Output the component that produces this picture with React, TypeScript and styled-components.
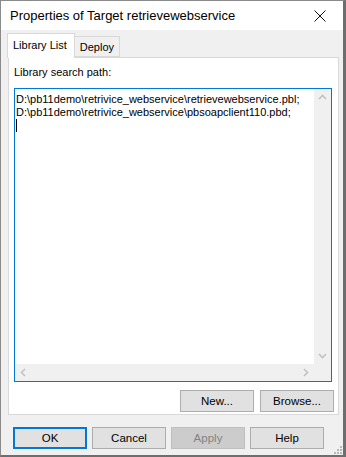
import styled, { createGlobalStyle } from "styled-components";

const Global = createGlobalStyle`
  html, body {
    margin: 0;
    padding: 0;
    background: #f0f0f0;
  }
  body {
    font-family: "Liberation Sans", Arial, sans-serif;
    font-size: 11px;
    color: #000;
  }
`;

const Window = styled.div`
  box-sizing: border-box;
  width: 346px;
  height: 457px;
  display: flex;
  flex-direction: column;
  background: #f0f0f0;
  border: 1px solid #8a8a8a;
  border-right: 3px solid #6e6e6e;
  border-bottom: 2px solid #6e6e6e;
  position: relative;
`;

const TitleBar = styled.div`
  height: 29px;
  flex: none;
  display: flex;
  align-items: center;
  justify-content: space-between;
  background: #fff;
  padding: 0 0 0 9px;
  font-size: 13px;
  color: #000;
`;

const CloseBox = styled.div`
  width: 46px;
  height: 29px;
  display: flex;
  align-items: center;
  justify-content: center;
`;

const Body = styled.div`
  flex: 1;
  display: flex;
  flex-direction: column;
  padding: 3px 0 0 6px;
`;

const Tabs = styled.div`
  display: flex;
  align-items: flex-end;
  height: 24px;
  position: relative;
  z-index: 1;
`;

const Tab = styled.div<{ $active?: boolean }>`
  box-sizing: border-box;
  height: ${(p) => (p.$active ? "25px" : "21px")};
  padding: ${(p) => (p.$active ? "5px 7px 0 5px" : "4px 5px 0 5px")};
  background: ${(p) => (p.$active ? "#fff" : "#f0f0f0")};
  border: 1px solid #d9d9d9;
  border-bottom: ${(p) => (p.$active ? "none" : "1px solid #d9d9d9")};
  margin-bottom: ${(p) => (p.$active ? "-1px" : "0")};
  border-left: ${(p) => (p.$active ? "1px solid #d9d9d9" : "none")};
`;

const Panel = styled.div`
  box-sizing: border-box;
  width: 331px;
  height: 358px;
  margin-left: 1px;
  background: #fff;
  border: 1px solid #d9d9d9;
  display: flex;
  flex-direction: column;
  padding: 8px 4px 2px 5px;
`;

const Label = styled.div`
  height: 22px;
`;

const ListBox = styled.div`
  box-sizing: border-box;
  width: 318px;
  height: 295px;
  border: 1px solid #0078d7;
  display: grid;
  grid-template-columns: 1fr 17px;
  grid-template-rows: 1fr 17px;
`;

const TextArea = styled.div`
  padding: 4px 0 0 1px;
  font-size: 11px;
  line-height: 13px;
  white-space: pre;
  overflow: hidden;
  color: #000;
`;

const Caret = styled.div`
  width: 1px;
  height: 13px;
  background: #000;
`;

const ScrollTrack = styled.div<{ $vertical?: boolean }>`
  background: #f0f0f0;
  display: flex;
  flex-direction: ${(p) => (p.$vertical ? "column" : "row")};
  justify-content: space-between;
  align-items: center;
`;

const ArrowBox = styled.div`
  width: 17px;
  height: 17px;
  display: flex;
  align-items: center;
  justify-content: center;
`;

const Corner = styled.div`
  background: #f0f0f0;
`;

const ButtonRow = styled.div<{ $gap: number }>`
  display: flex;
  justify-content: flex-end;
  gap: ${(p) => p.$gap}px;
`;

const Button = styled.button<{ $default?: boolean }>`
  box-sizing: border-box;
  width: 74px;
  height: 22px;
  padding: 0;
  font-family: inherit;
  font-size: 11.5px;
  color: #000;
  background: #e1e1e1;
  border: ${(p) => (p.$default ? "2px solid #0078d7" : "1px solid #adadad")};
  &:disabled {
    background: #cccccc;
    border-color: #bfbfbf;
    color: #838383;
  }
`;

const PanelButtons = styled(ButtonRow)`
  margin-top: 8px;
`;

const DialogButtons = styled.div`
  display: flex;
  gap: 5px;
  margin-top: 12px;
  padding-left: 6px;
`;

const Grip = styled.svg`
  position: absolute;
  right: 1px;
  bottom: 1px;
`;

function Chevron({ dir }: { dir: "up" | "down" | "left" | "right" }) {
  const d = {
    up: "M1 6 L4.5 2.5 L8 6",
    down: "M1 3 L4.5 6.5 L8 3",
    left: "M6 1 L2.5 4.5 L6 8",
    right: "M3 1 L6.5 4.5 L3 8",
  }[dir];
  return (
    <svg width="9" height="9" viewBox="0 0 9 9">
      <path d={d} fill="none" stroke="#c2c2c2" strokeWidth="1.6" />
    </svg>
  );
}

export default function App() {
  return (
    <>
      <Global />
      <Window>
        <TitleBar>
          <span>Properties of Target retrievewebservice</span>
          <CloseBox>
            <svg width="12" height="12" viewBox="0 0 12 12">
              <path d="M0.5 0.5 L11.5 11.5 M11.5 0.5 L0.5 11.5" stroke="#111" strokeWidth="1" />
            </svg>
          </CloseBox>
        </TitleBar>
        <Body>
          <Tabs>
            <Tab $active>Library List</Tab>
            <Tab>Deploy</Tab>
          </Tabs>
          <Panel>
            <Label>Library search path:</Label>
            <ListBox>
              <TextArea>
                {"D:\\pb11demo\\retrivice_webservice\\retrievewebservice.pbl;\n"}
                {"D:\\pb11demo\\retrivice_webservice\\pbsoapclient110.pbd;\n"}
                <Caret />
              </TextArea>
              <ScrollTrack $vertical>
                <ArrowBox>
                  <Chevron dir="up" />
                </ArrowBox>
                <ArrowBox>
                  <Chevron dir="down" />
                </ArrowBox>
              </ScrollTrack>
              <ScrollTrack>
                <ArrowBox>
                  <Chevron dir="left" />
                </ArrowBox>
                <ArrowBox>
                  <Chevron dir="right" />
                </ArrowBox>
              </ScrollTrack>
              <Corner />
            </ListBox>
            <PanelButtons $gap={6}>
              <Button>New...</Button>
              <Button>Browse...</Button>
            </PanelButtons>
          </Panel>
          <DialogButtons>
            <Button $default>OK</Button>
            <Button>Cancel</Button>
            <Button disabled>Apply</Button>
            <Button>Help</Button>
          </DialogButtons>
        </Body>
        <Grip width="10" height="10" viewBox="0 0 10 10">
          <rect x="8" y="2" width="2" height="2" fill="#b8b8b8" />
          <rect x="5" y="5" width="2" height="2" fill="#b8b8b8" />
          <rect x="8" y="5" width="2" height="2" fill="#b8b8b8" />
          <rect x="2" y="8" width="2" height="2" fill="#b8b8b8" />
          <rect x="5" y="8" width="2" height="2" fill="#b8b8b8" />
          <rect x="8" y="8" width="2" height="2" fill="#b8b8b8" />
        </Grip>
      </Window>
    </>
  );
}
